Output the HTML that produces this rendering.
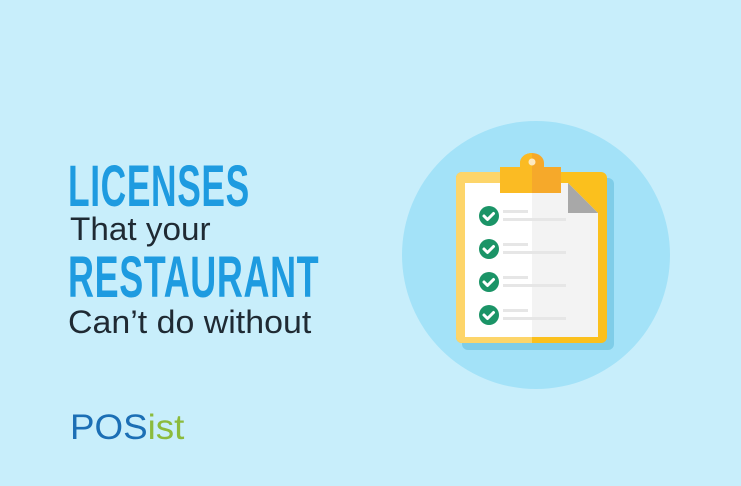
<!DOCTYPE html>
<html><head><meta charset="utf-8"><style>
html,body{margin:0;padding:0}
body{width:741px;height:486px;background:#c8eefb;position:relative;overflow:hidden;font-family:"Liberation Sans",sans-serif}
.t{position:absolute;white-space:nowrap;transform-origin:0 0;line-height:1}
.big{color:#1e9be0;font-weight:bold;font-size:58px;letter-spacing:1px}
.sm{color:#1f2a33;font-size:32px}
</style></head><body>
<div class="t big" style="left:68px;top:158px;transform:scaleX(0.61)">LICENSES</div>
<div class="t sm" style="left:70px;top:213px;transform:scaleX(1.04)">That your</div>
<div class="t big" style="left:68px;top:249px;transform:scaleX(0.62)">RESTAURANT</div>
<div class="t sm" style="left:68px;top:306px;transform:scaleX(1.06)">Can’t do without</div>
<div class="t" style="left:70px;top:410px;font-size:35px;transform:scaleX(1.05)"><span style="color:#1c6fb5">POS</span><span style="color:#8cbb3c">ist</span></div>
<svg style="position:absolute;left:0;top:0" width="741" height="486">
<circle cx="536" cy="255" r="134" fill="#a3e2f8"/>
<rect x="462" y="178" width="152" height="172" rx="6" fill="#7fcde8"/>
<rect x="456" y="172" width="151" height="171" rx="6" fill="#fbc01d"/>
<path d="M462 172 H532 V343 H462 A6 6 0 0 1 456 337 V178 A6 6 0 0 1 462 172Z" fill="#fdd56a"/>
<path d="M465 183 H568 L598 213 V337 H465Z" fill="#f3f3f3"/>
<path d="M465 183 H532 V337 H465Z" fill="#ffffff"/>
<path d="M568 183 L598 213 H568Z" fill="#a8a8a8"/>
<rect x="500" y="167" width="61" height="26" fill="#f6a92a"/>
<rect x="500" y="167" width="32" height="26" fill="#fbbb23"/>
<path d="M520 172 V163 A12 10 0 0 1 544 163 V172Z" fill="#f6a92a"/>
<path d="M520 172 V163 A12 10 0 0 1 532 153 V172Z" fill="#fbbb23"/>
<circle cx="532" cy="162" r="3.5" fill="#fde9c0"/>
<g fill="#1b9467">
<circle cx="489" cy="216" r="10"/><circle cx="489" cy="249" r="10"/><circle cx="489" cy="282" r="10"/><circle cx="489" cy="315" r="10"/></g>
<g fill="none" stroke="#fff" stroke-width="3" stroke-linecap="round" stroke-linejoin="round">
<path d="M484 216 l3.5 3.5 l6 -6"/><path d="M484 249 l3.5 3.5 l6 -6"/><path d="M484 282 l3.5 3.5 l6 -6"/><path d="M484 315 l3.5 3.5 l6 -6"/></g>
<g fill="#e6e6e6">
<rect x="503" y="210" width="25" height="3"/><rect x="503" y="218" width="63" height="3"/>
<rect x="503" y="243" width="25" height="3"/><rect x="503" y="251" width="63" height="3"/>
<rect x="503" y="276" width="25" height="3"/><rect x="503" y="284" width="63" height="3"/>
<rect x="503" y="309" width="25" height="3"/><rect x="503" y="317" width="63" height="3"/>
</g>
</svg>
</body></html>
